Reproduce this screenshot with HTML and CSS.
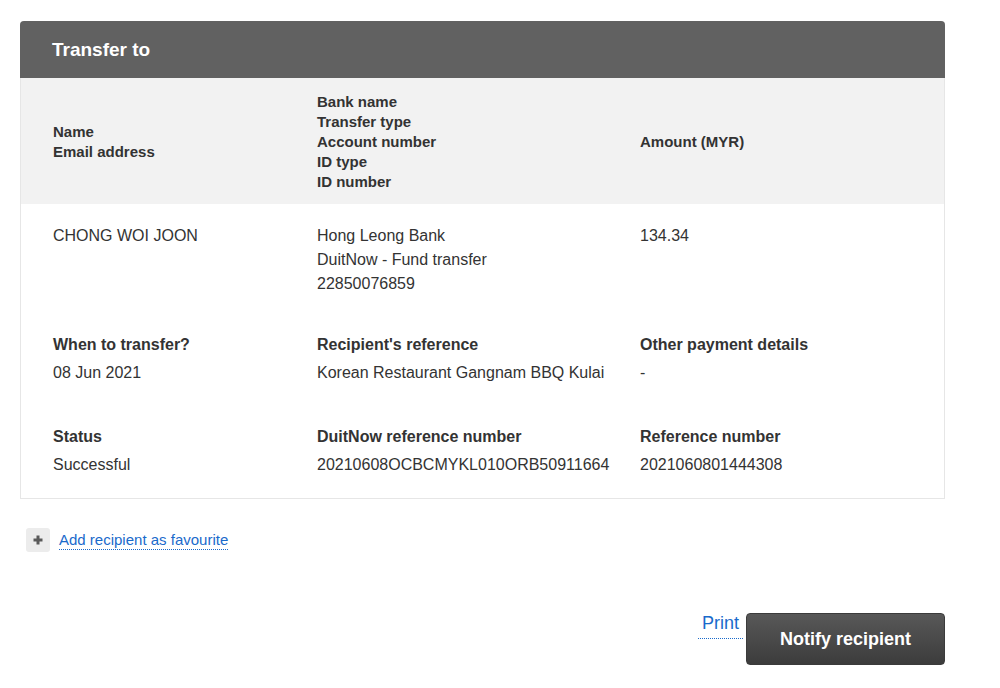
FILE: index.html
```html
<!DOCTYPE html>
<html>
<head>
<meta charset="utf-8">
<link rel="stylesheet" href="styles.css">
</head>
<body>
<div class="page">
  <section class="card">
    <header class="card-head">Transfer to</header>
    <div class="thead">
      <div class="th">Name<br>Email address</div>
      <div class="th">Bank name<br>Transfer type<br>Account number<br>ID type<br>ID number</div>
      <div class="th">Amount (MYR)</div>
    </div>
    <div class="details">
      <div class="row row-first">
        <div class="val">CHONG WOI JOON</div>
        <div class="val">Hong Leong Bank<br>DuitNow - Fund transfer<br>22850076859</div>
        <div class="val">134.34</div>
      </div>
      <div class="row row-second">
        <div class="field"><div class="label">When to transfer?</div><div class="val">08 Jun 2021</div></div>
        <div class="field"><div class="label">Recipient's reference</div><div class="val">Korean Restaurant Gangnam BBQ Kulai</div></div>
        <div class="field"><div class="label">Other payment details</div><div class="val">-</div></div>
      </div>
      <div class="row row-third">
        <div class="field"><div class="label">Status</div><div class="val">Successful</div></div>
        <div class="field"><div class="label">DuitNow reference number</div><div class="val">20210608OCBCMYKL010ORB50911664</div></div>
        <div class="field"><div class="label">Reference number</div><div class="val">2021060801444308</div></div>
      </div>
    </div>
  </section>

  <div class="fav">
    <span class="plus-box">
      <svg width="12" height="12" viewBox="0 0 12 12"><path d="M6 1.5v9M1.5 6h9" stroke="#5a5a5a" stroke-width="3"/></svg>
    </span>
    <a class="fav-link" href="#">Add recipient as favourite</a>
  </div>

  <div class="actions">
    <a class="print" href="#">Print</a>
    <button class="notify">Notify recipient</button>
  </div>
</div>
</body>
</html>
```

FILE: styles.css
```css
html, body {
  margin: 0;
  padding: 0;
  background: #fff;
}
body {
  font-family: "Liberation Sans", Arial, sans-serif;
  color: #333;
}
.page {
  padding: 21px 0 0 20px;
  width: 925px;
}
.card {
  border: 1px solid #e6e6e6;
  border-top: none;
  border-radius: 4px 4px 0 0;
}
.card-head {
  background: #616161;
  color: #fff;
  font-weight: bold;
  font-size: 19px;
  height: 57px;
  line-height: 57px;
  padding-left: 32px;
  margin: 0 -1px;
  border-radius: 4px 4px 0 0;
}
.thead,
.row {
  display: grid;
  grid-template-columns: 264px 323px 1fr;
}
.thead {
  background: #f2f2f2;
  padding: 14px 0 12px 32px;
  align-items: center;
  font-weight: bold;
  font-size: 15px;
  line-height: 20px;
}
.details {
  padding: 20px 0 21px 32px;
  font-size: 16px;
  line-height: 24px;
}
.row-second {
  margin-top: 37px;
}
.row-third {
  margin-top: 40px;
}
.label {
  font-weight: bold;
  margin-bottom: 4px;
}
.fav {
  display: flex;
  align-items: center;
  margin: 29px 0 0 6px;
}
.plus-box {
  width: 24px;
  height: 24px;
  background: #ececec;
  border-radius: 3px;
  display: flex;
  align-items: center;
  justify-content: center;
}
.fav-link {
  margin-left: 9px;
  font-size: 15px;
  line-height: 18px;
  color: #1a6acb;
  text-decoration: none;
  border-bottom: 1px dotted #1a6acb;
}
.actions {
  display: flex;
  justify-content: flex-end;
  align-items: flex-start;
  margin-top: 60px;
}
.print {
  font-size: 18px;
  line-height: 22px;
  padding: 0 4px 4px 4px;
  color: #1a6acb;
  text-decoration: none;
  border-bottom: 1px dotted #1a6acb;
  margin-right: 3px;
}
.notify {
  margin-top: 1px;
  width: 199px;
  height: 52px;
  border: 1px solid #3b3b3b;
  border-radius: 4px;
  background: linear-gradient(#585858, #3c3c3c);
  color: #fff;
  font-family: "Liberation Sans", Arial, sans-serif;
  font-weight: bold;
  font-size: 18px;
  padding: 0;
}
```
